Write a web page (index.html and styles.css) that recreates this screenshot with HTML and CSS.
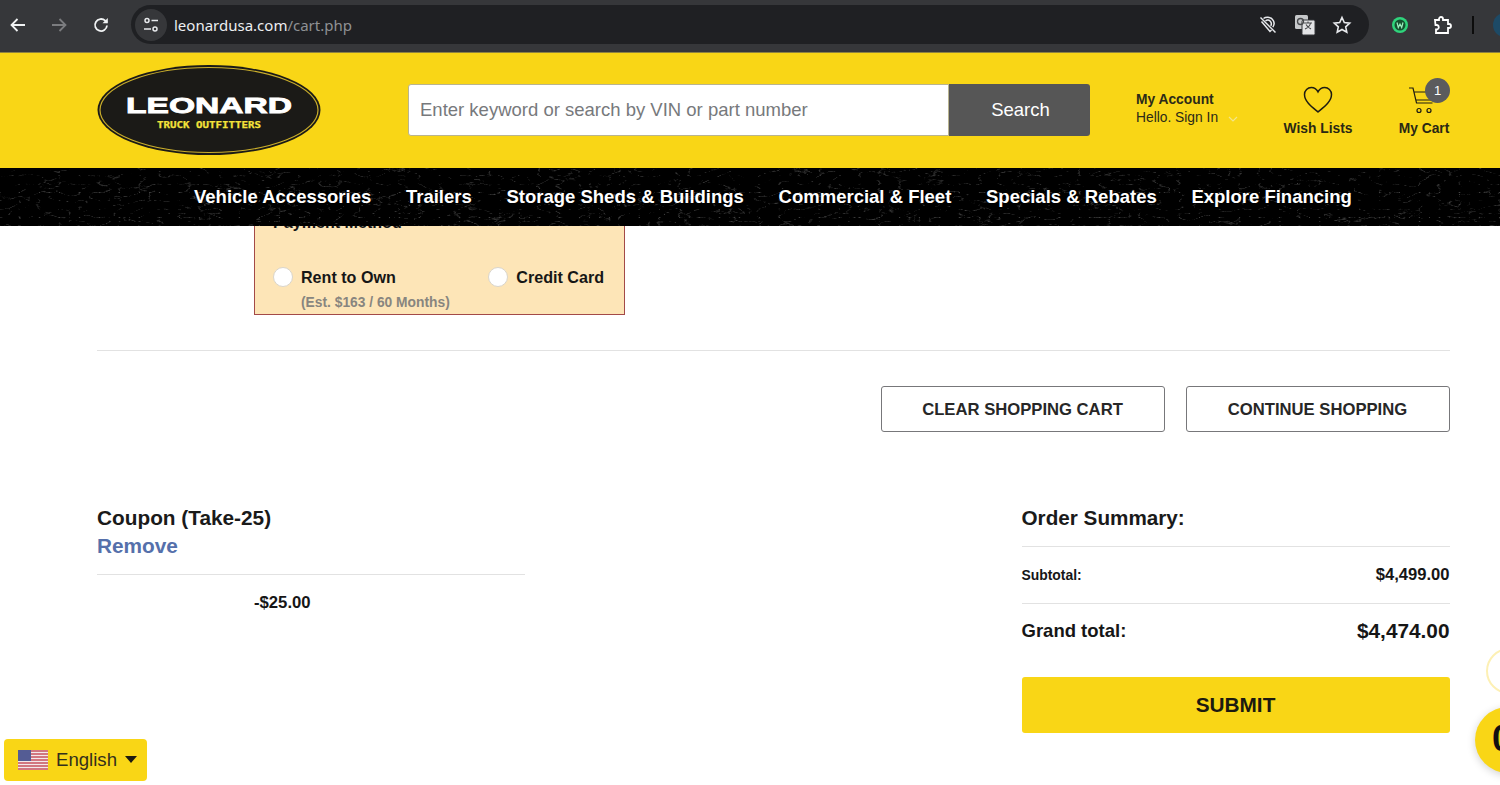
FILE: index.html
```html
<!DOCTYPE html>
<html lang="en">
<head>
    <meta charset="UTF-8">
    <meta name="viewport" content="width=device-width, initial-scale=1.0">
    <title>Shopping Cart</title>
    <link rel="stylesheet" href="styles.css">
</head>
<body>
    <!-- browser toolbar -->
    <div class="toolbar">
        <div class="tool-btn">
            <svg width="20" height="20" viewBox="0 0 20 20" fill="none" stroke="#f1f3f4" stroke-width="1.8"><path d="M17 10H4M9.5 4 3.5 10l6 6"/></svg>
        </div>
        <div class="tool-btn">
            <svg width="20" height="20" viewBox="0 0 20 20" fill="none" stroke="#7b7c7f" stroke-width="1.8"><path d="M3 10h13M10.5 4l6 6-6 6"/></svg>
        </div>
        <div class="tool-btn">
            <svg width="20" height="20" viewBox="0 0 20 20" fill="none" stroke="#f1f3f4" stroke-width="1.8"><path d="M16 10.5A6 6 0 1 1 14.2 5.7L16 7.5"/><path d="M16.8 3v5.3h-5.3z" fill="#f1f3f4" stroke="none"/></svg>
        </div>
        <div class="omnibox">
            <div class="site-info">
                <svg width="18" height="18" viewBox="0 0 18 18" fill="none" stroke="#e8eaed" stroke-width="1.5"><circle cx="5" cy="4.5" r="2"/><path d="M9.5 4.5H16M2 13h7"/><circle cx="13" cy="13" r="2"/></svg>
            </div>
            <div class="url">leonardusa.com<span class="url-path">/cart.php</span></div>
            <div class="omni-icons">
                <svg width="20" height="20" viewBox="0 0 20 20" fill="none" stroke="#e8eaed" stroke-width="1.5"><path d="M2.5 2.5 17.5 17.500"/><path d="M5.5 3.5C8 1.500 12 1.800 14.300 4.200c2.300 2.500 2.200 5.500.5 8M3.500 6.500 12 16.500l1.500-1.500M7.500 6C9 4.800 11 5 12.300 6.300c1.200 1.300 1.300 3 .5 4.500"/></svg>
                <svg width="22" height="22" viewBox="0 0 22 22"><rect x="1" y="1" width="13" height="14" rx="1.500" fill="#c6c8ca"/><rect x="8" y="6" width="13" height="15" rx="1.500" fill="#e3e4e6" stroke="#35363a"/><path d="M10 9h8M14 7.500V9M16.500 9c-.5 3-3 5-5.500 6M12 10.500c1 2 3 3.500 5 4.500" fill="none" stroke="#46484b" stroke-width="1.100"/><circle cx="6.500" cy="7.500" r="3" fill="none" stroke="#46484b" stroke-width="1.300"/></svg>
                <svg width="20" height="20" viewBox="0 0 20 20" fill="none" stroke="#e8eaed" stroke-width="1.600"><path d="m10 2.500 2.300 5 5.400.6-4 3.700 1.100 5.400-4.800-2.700-4.800 2.700 1.100-5.400-4-3.700 5.400-.6z"/></svg>
            </div>
        </div>
        <div class="ext-icons">
            <svg class="ext-w" width="18" height="18" viewBox="0 0 18 18"><circle cx="9" cy="9" r="8" fill="#2fd47c"/><circle cx="9" cy="9" r="5.500" fill="#14512f"/><path d="m6 6.500 1.300 5L9 8l1.700 3.500L12 6.500" fill="none" stroke="#9cf0bf" stroke-width="1.200"/></svg>
            <svg class="ext-puzzle" width="20" height="20" viewBox="0 0 20 20" fill="none" stroke="#fff" stroke-width="1.800"><path d="M3 5h4V4a2 2 0 0 1 4 0v1h5v4h1a2 2 0 0 1 0 4h-1v5H4v-3.500h1a2.300 2.300 0 0 0 0-4.500H3.500z"/></svg>
            <span class="tool-sep"></span>
            <span class="profile"></span>
        </div>
    </div>

    <!-- site header -->
    <header class="site-header">
        <svg class="logo" width="224" height="90" viewBox="0 0 224 90">
            <ellipse cx="112" cy="45" rx="111.500" ry="45" fill="#1b1a17"/>
            <ellipse cx="112" cy="45" rx="109" ry="42.500" fill="none" stroke="#c9ad2b" stroke-width="1.200"/>
            <text class="logo-name" x="29" y="48" textLength="166" lengthAdjust="spacingAndGlyphs">LEONARD</text>
            <text class="logo-sub" x="60" y="62.500" textLength="104" lengthAdjust="spacingAndGlyphs">TRUCK OUTFITTERS</text>
        </svg>
        <form class="search">
            <div class="search-input">Enter keyword or search by VIN or part number</div>
            <div class="search-btn">Search</div>
        </form>
        <div class="account">
            <b>My Account</b>
            <div class="signin">Hello. Sign In
                <svg width="10" height="6" viewBox="0 0 10 6" fill="none" stroke="#f3e58a" stroke-width="1.200"><path d="m1 1 4 4 4-4"/></svg>
            </div>
        </div>
        <div class="head-link wish">
            <svg width="30" height="28" viewBox="0 0 30 28" fill="none" stroke="#1e1c12" stroke-width="1.500"><path d="M15 26C9 21 1.500 15.500 1.500 8.500 1.500 4.300 4.700 1.500 8.300 1.500c3 0 5.300 1.600 6.700 4.300 1.400-2.700 3.700-4.300 6.700-4.300 3.600 0 6.800 2.800 6.800 7 0 7-7.500 12.500-13.500 17.500z"/></svg>
            <b>Wish Lists</b>
        </div>
        <div class="head-link cart">
            <svg width="28" height="28" viewBox="0 0 28 28" fill="none" stroke="#1e1c12" stroke-width="1.200"><path d="M1 2h4l3.500 15h16M6 6h20l-2 8H8"/><circle cx="11" cy="24.500" r="2"/><circle cx="21" cy="24.500" r="2"/></svg>
            <b>My Cart</b>
            <span class="cart-count">1</span>
        </div>
    </header>

    <!-- main nav with leather look -->
    <nav class="main-nav">
        <svg class="leather" width="1500" height="58">
            <filter id="grain" x="0" y="0" width="100%" height="100%">
                <feTurbulence type="turbulence" baseFrequency="0.05 0.12" numOctaves="4" seed="11"/>
                <feColorMatrix values="0 0 0 0 1  0 0 0 0 1  0 0 0 0 1  -6 0 0 0 0.95"/>
            </filter>
            <rect width="1500" height="58" fill="#000"/>
            <rect width="1500" height="58" filter="url(#grain)" opacity="0.26"/>
        </svg>
        <a>Vehicle Accessories</a>
        <a>Trailers</a>
        <a>Storage Sheds &amp; Buildings</a>
        <a>Commercial &amp; Fleet</a>
        <a>Specials &amp; Rebates</a>
        <a>Explore Financing</a>
    </nav>

    <main class="page">
        <section class="payment">
            <div class="payment-title">Payment Method</div>
            <div class="payment-options">
                <div class="pay-opt">
                    <span class="radio"></span>
                    <div>
                        <b>Rent to Own</b>
                        <div class="est">(Est. $163 / 60 Months)</div>
                    </div>
                </div>
                <div class="pay-opt">
                    <span class="radio"></span>
                    <b>Credit Card</b>
                </div>
            </div>
        </section>

        <div class="cart-actions">
            <a class="btn btn-clear">CLEAR SHOPPING CART</a>
            <a class="btn btn-continue">CONTINUE SHOPPING</a>
        </div>

        <div class="cart-bottom">
            <section class="coupon">
                <div class="coupon-name">Coupon (Take-25)</div>
                <a class="coupon-remove">Remove</a>
                <div class="coupon-amount">-$25.00</div>
            </section>
            <section class="summary">
                <h2>Order Summary:</h2>
                <div class="sum-row">
                    <span class="sum-label">Subtotal:</span>
                    <b>$4,499.00</b>
                </div>
                <div class="sum-row sum-total">
                    <span>Grand total:</span>
                    <span class="sum-value">$4,474.00</span>
                </div>
                <a class="submit">SUBMIT</a>
            </section>
        </div>
    </main>

    <!-- floating widgets -->
    <div class="lang">
        <svg width="30" height="20" viewBox="0 0 30 20">
            <rect width="30" height="20" fill="#f3e9ea"/>
            <path d="M0 1h30M0 4h30M0 7h30M0 10h30M0 13h30M0 16h30M0 19h30" stroke="#c8525e" stroke-width="1.500"/>
            <rect width="13" height="11" fill="#545c94"/>
        </svg>
        <span>English</span>
        <span class="lang-caret"></span>
    </div>
    <div class="float-ring"></div>
    <div class="float-chat">0</div>
</body>
</html>
```

FILE: styles.css
```css
body {
    margin: 0;
    height: 785px;
    overflow: hidden;
    position: relative;
    background: #fff;
    font-family: "Liberation Sans", Arial, sans-serif;
    color: #161616;
}

/* browser toolbar */
.toolbar {
    height: 52px;
    box-sizing: border-box;
    padding: 5px 0 8px;
    background: #36373a;
    display: flex;
    align-items: center;
}

.tool-btn {
    flex: none;
    width: 41.500px;
    display: flex;
    justify-content: center;
}

.tool-btn:first-child {
    margin-left: -3px;
}

.omnibox {
    flex: none;
    margin-left: 9.500px;
    width: 1238px;
    height: 39px;
    border-radius: 20px;
    background: #1f2023;
    display: flex;
    align-items: center;
    box-sizing: border-box;
    padding-left: 4px;
    padding-right: 17px;
}

.site-info {
    width: 32px;
    height: 32px;
    border-radius: 50%;
    background: #36373a;
    display: flex;
    align-items: center;
    justify-content: center;
}

.url {
    margin-left: 7px;
    font-family: "Noto Sans", sans-serif;
    font-size: 15px;
    color: #eceef0;
}

.url-path {
    color: #8f9194;
}

.omni-icons {
    margin-left: auto;
    display: flex;
    align-items: center;
    gap: 16px;
}

.ext-icons {
    display: flex;
    align-items: center;
    margin-left: 22px;
}

.ext-puzzle {
    margin-left: 23px;
}

.tool-sep {
    width: 2px;
    height: 18px;
    margin-left: 20px;
    background: #0c0c0c;
}

.profile {
    width: 24px;
    height: 24px;
    margin-left: 19px;
    flex: none;
    border-radius: 50%;
    background: #1d4a66;
}

/* site header */
.site-header {
    height: 116px;
    background: #f9d616;
    display: flex;
    align-items: center;
    padding-left: 97px;
    box-sizing: border-box;
    border-top: 1px solid #8f8341;
}

.logo {
    flex: none;
    margin-top: -2px;
}

.logo-name {
    font-size: 21.500px;
    font-weight: bold;
    fill: #fff;
    stroke: #fff;
    stroke-width: 0.8px;
}

.logo-sub {
    font-family: "DejaVu Sans Mono", monospace;
    font-size: 9.500px;
    font-weight: bold;
    fill: #f3e23a;
    stroke: #f3e23a;
    stroke-width: 0.25px;
}

.search {
    margin: -1px 0 0 87px;
    width: 682px;
    height: 52px;
    display: flex;
}

.search-input {
    flex: 1;
    background: #fff;
    border: 1px solid #b9b48f;
    border-radius: 3px 0 0 3px;
    font-size: 18.500px;
    color: #77797c;
    line-height: 50px;
    padding-left: 11px;
}

.search-btn {
    width: 141px;
    box-sizing: border-box;
    padding-left: 2px;
    background: #565656;
    border-radius: 0 3px 3px 0;
    color: #fff;
    font-size: 18.500px;
    text-align: center;
    line-height: 52px;
}

.account {
    margin-left: 46px;
    width: 147px;
    font-size: 13.800px;
    line-height: 18px;
    color: #2c2a18;
    margin-top: -4px;
}

.signin svg {
    margin-left: 6px;
}

.head-link {
    display: flex;
    flex-direction: column;
    align-items: center;
    font-size: 13.800px;
    color: #2a2814;
    position: relative;
    gap: 7px;
}

.wish {
    width: 70px;
}

.cart {
    width: 52px;
    margin-left: 45px;
}

.cart svg {
    margin-right: 4px;
}

.cart-count {
    position: absolute;
    top: -8px;
    right: 0;
    width: 25px;
    height: 25px;
    border-radius: 50%;
    background: #5b5b5d;
    color: #fff;
    font-size: 13px;
    text-align: center;
    line-height: 25px;
}

/* main nav */
.main-nav {
    position: relative;
    z-index: 2;
    height: 58px;
    background: #000;
    display: flex;
    align-items: center;
    padding-left: 194px;
    gap: 34.700px;
}

.leather {
    position: absolute;
    top: 0;
    left: 0;
}

.main-nav a {
    position: relative;
    color: #fff;
    font-size: 18.500px;
    font-weight: bold;
    white-space: nowrap;
}

/* cart page */
.page {
    padding: 0 50.500px 0 97px;
}

.payment {
    margin: -20px 0 0 157px;
    width: 370.500px;
    height: 109px;
    box-sizing: border-box;
    background: #fde5b7;
    border: 1px solid #a34a48;
    padding: 6px 19.500px 0 18px;
    font-size: 16.100px;
}

.payment-title {
    font-weight: bold;
    line-height: 18px;
}

.payment-options {
    display: flex;
    justify-content: space-between;
    margin-top: 36px;
}

.pay-opt {
    display: flex;
    gap: 8px;
    line-height: 20px;
}

.radio {
    flex: none;
    width: 18px;
    height: 18px;
    border-radius: 50%;
    background: #fff;
    border: 1px solid #d9d5cc;
}

.est {
    margin-top: 8px;
    font-size: 13.800px;
    font-weight: bold;
    line-height: 16px;
    color: #88857f;
}

.cart-actions {
    margin-top: 35px;
    padding-top: 35px;
    border-top: 1px solid #e2e2e2;
    display: flex;
    justify-content: flex-end;
    gap: 21px;
}

.btn {
    height: 46px;
    box-sizing: border-box;
    border: 1px solid #77777a;
    border-radius: 3px;
    font-size: 16.650px;
    font-weight: bold;
    line-height: 45px;
    text-align: center;
    color: #272727;
}

.btn-clear {
    width: 284px;
}

.btn-continue {
    width: 264px;
}

.cart-bottom {
    margin-top: 72px;
    display: flex;
    justify-content: space-between;
}

.coupon {
    width: 428px;
}

.coupon-name {
    font-size: 20.800px;
    font-weight: bold;
    line-height: 28px;
    color: #1a1a1a;
}

.coupon-remove {
    display: block;
    font-size: 20.800px;
    font-weight: bold;
    line-height: 28px;
    color: #5570ab;
    padding-bottom: 14px;
    border-bottom: 1px solid #e2e2e2;
}

.coupon-amount {
    margin-top: 19px;
    padding-left: 157px;
    font-size: 16.700px;
    font-weight: bold;
    line-height: 18px;
}

.summary {
    width: 428px;
}

.summary h2 {
    margin: 0;
    font-size: 20.700px;
    line-height: 28px;
    padding-bottom: 14px;
    border-bottom: 1px solid #e2e2e2;
    color: #1a1a1a;
}

.sum-row {
    height: 56px;
    display: flex;
    justify-content: space-between;
    align-items: center;
    font-size: 16.600px;
}

.sum-label {
    font-size: 13.900px;
    font-weight: bold;
}

.sum-total {
    box-sizing: border-box;
    height: 57px;
    padding-bottom: 2px;
    border-top: 1px solid #e2e2e2;
    font-size: 18.500px;
    font-weight: bold;
}

.sum-value {
    font-size: 20.800px;
}

.submit {
    display: block;
    margin-top: 17px;
    height: 56px;
    border-radius: 3px;
    background: #f9d616;
    font-size: 20.800px;
    font-weight: bold;
    line-height: 56px;
    text-align: center;
    color: #1c1a10;
}

/* floating widgets */
.lang {
    position: absolute;
    left: 4px;
    top: 739px;
    width: 143px;
    height: 42px;
    box-sizing: border-box;
    padding-left: 14px;
    border-radius: 4px;
    background: #f9d616;
    display: flex;
    align-items: center;
    gap: 8px;
    font-size: 18.600px;
    color: #33301c;
}

.lang-caret {
    width: 0;
    height: 0;
    border-left: 6px solid transparent;
    border-right: 6px solid transparent;
    border-top: 7px solid #1c1a10;
    margin-bottom: 2px;
}

.float-ring {
    position: absolute;
    left: 1486px;
    top: 648px;
    width: 46px;
    height: 46px;
    box-sizing: border-box;
    border: 2px solid #fdf0b4;
    border-radius: 50%;
    background: #fff;
}

.float-chat {
    position: absolute;
    left: 1475px;
    top: 707px;
    width: 66px;
    height: 66px;
    border-radius: 50%;
    background: #f9d616;
    box-shadow: 0 2px 8px rgba(0,0,0,0.18);
    font-size: 36px;
    font-weight: bold;
    line-height: 64px;
    padding-left: 17px;
    box-sizing: border-box;
    color: #111;
}
```
